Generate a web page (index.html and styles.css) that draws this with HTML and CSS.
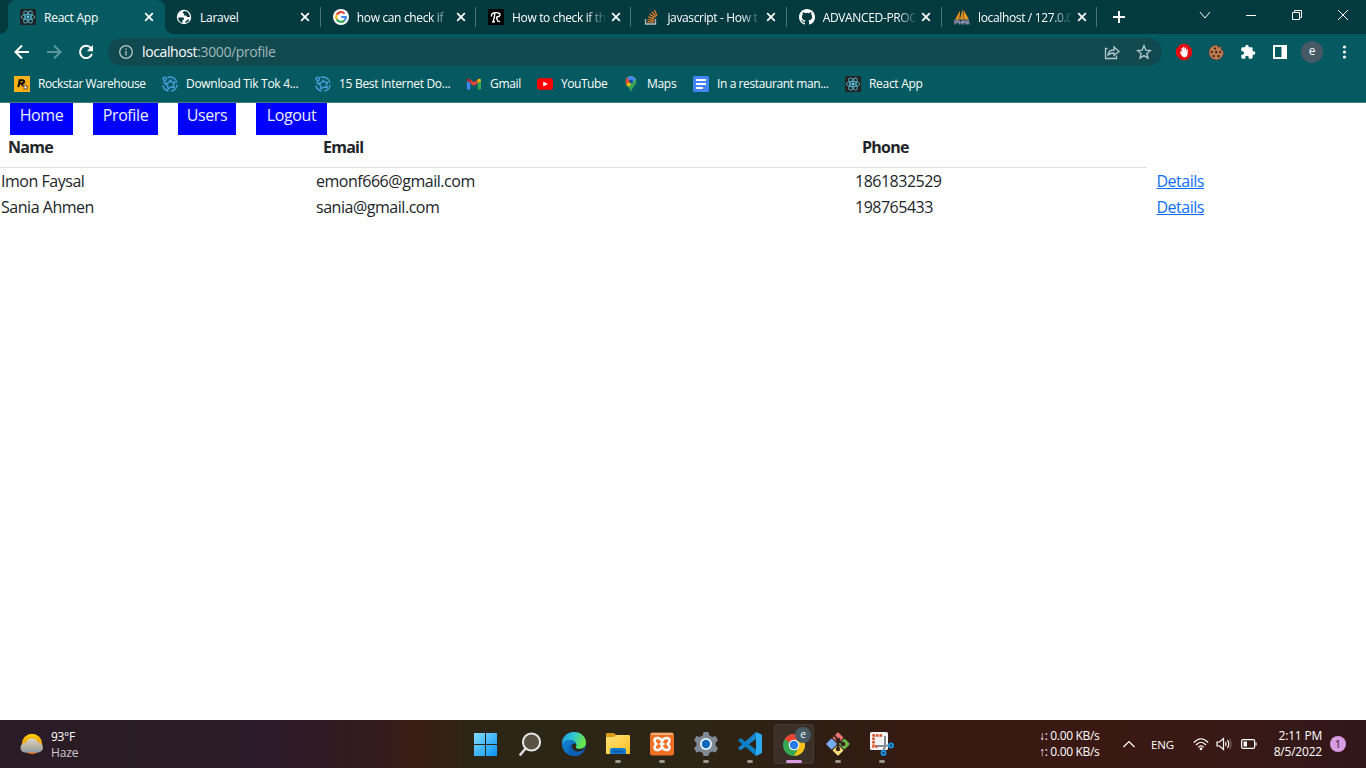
FILE: index.html
```html
<!DOCTYPE html>
<html lang="en">
<head>
<meta charset="utf-8">
<title>React App</title>
<link rel="stylesheet" href="styles.css">
</head>
<body>
<svg class="defs" width="0" height="0">
  <symbol id="react" viewBox="0 0 16 16"><rect width="16" height="16" rx="1.5" fill="#222"/><g fill="none" stroke="#53b5cc" stroke-width=".9"><ellipse cx="8" cy="8" rx="6.8" ry="2.6"/><ellipse cx="8" cy="8" rx="6.8" ry="2.6" transform="rotate(60 8 8)"/><ellipse cx="8" cy="8" rx="6.8" ry="2.6" transform="rotate(120 8 8)"/></g><circle cx="8" cy="8" r="1.4" fill="#61dafb"/></symbol>
  <symbol id="close" viewBox="0 0 10 10"><path d="M1.200 1.200l7.600 7.600M8.800 1.200L1.200 8.800" stroke="#fff" stroke-width="1.800"/></symbol>
  <symbol id="pma" viewBox="0 0 16 16"><path d="M1 10.500L6 2v8.500zM6 10.500L8.500 0l1 10.500zM9.500 1L15 10.500h-5z" fill="#f89c0e"/><path d="M8.800 1l1.600 9.500H8.500zM5.500 4l.8 6.500H4z" fill="#a06a3c"/><path d="M1 15.500v-4h3v2H1m4.500-2v4m0-2H8m0-2v4m1 0v-4l1.500 2 1.500-2v4m1 0l1-4 1.500 4" fill="none" stroke="#8c8ca8" stroke-width="1.300"/></symbol>
  <symbol id="startab" viewBox="0 0 16 16"><g fill="none" stroke="#4b9edb" stroke-width="1.400" stroke-linejoin="round"><path d="M5.500 1.500a7.200 7.200 0 0 1 9.500 5M15.200 8.500a7 7 0 0 1-6.200 6.600M6.500 15A7 7 0 0 1 .9 9.500M1 7l2.500-1.500"/><path d="M8.500 4l1.200 2.400 3.300-.2-1.800 2.600 1.200 3-3.500-.8L6 13l-.3-3.400L3 7.700l3.400-.9z"/><circle cx="2.800" cy="2.800" r="1.700"/></g></symbol>
</svg>

<header class="browser">
  <div class="tabstrip">
    <div class="tab tab-active"><svg class="fav"><use href="#react"/></svg><span class="title">React App</span><svg class="x"><use href="#close"/></svg></div>
    <div class="tab"><svg class="fav" viewBox="0 0 16 16"><circle cx="8" cy="8" r="7.200" fill="#fff"/><path d="M2.200 8.400l4.700.2c1.500.1 1.200 1.800.7 2.200l-1.200.4v2.700C3.800 13.400 2.300 11 2.200 8.400zM8.400 2c-1 .7-2 .7-1.600 2.200l1.300.4v1.800l2 .2 1 1.400 2.900-.1C13.700 4.700 11.300 2.200 8.400 2zM9.400 12.600l2.500-2 1.400.1c-.7 1.600-2 2.900-3.900 3.200z" fill="#043c42"/></svg><span class="title">Laravel</span><svg class="x"><use href="#close"/></svg></div>
    <div class="tab sep"><svg class="fav" viewBox="0 0 16 16"><circle cx="8" cy="8" r="8" fill="#fff"/><g fill="none" stroke-width="2.100"><path d="M11.600 4.600A4.900 4.900 0 0 0 3.700 5.700" stroke="#ea4335"/><path d="M3.700 5.700a4.900 4.900 0 0 0 0 4.600" stroke="#fbbc05"/><path d="M3.700 10.300a4.900 4.900 0 0 0 7.600 1.300" stroke="#34a853"/><path d="M11.300 11.600A4.900 4.900 0 0 0 12.900 8H8.200" stroke="#4285f4"/></g></svg><span class="title fade">how can check if</span><svg class="x"><use href="#close"/></svg></div>
    <div class="tab sep"><svg class="fav" viewBox="0 0 16 16"><rect width="16" height="16" rx="1" fill="#000"/><path d="M3.400 7.500C3 4.500 5.500 3.600 8 3.600c3 0 4.500 1 3.900 2.700-.5 1.300-2.300 1.900-4 2M7 4.200L5.300 12.600M4 12.700h3M8.300 8.400l1.500 3.800 2.300.4" fill="none" stroke="#fff" stroke-width="1.400"/></svg><span class="title fade">How to check if th</span><svg class="x"><use href="#close"/></svg></div>
    <div class="tab sep"><svg class="fav" viewBox="0 0 16 16"><path d="M2.500 10v5h10v-5" fill="none" stroke="#bcbbbb" stroke-width="1.300"/><path d="M4.200 12.900h6.600M4.500 10.500l6.400.9M5.200 7.900l6.100 2M6.600 5.200l5.500 3.400M8.700 2.800l4.300 4.800M11.500 1l2.400 5.800" stroke="#f48024" stroke-width="1.200"/></svg><span class="title fade">javascript - How t</span><svg class="x"><use href="#close"/></svg></div>
    <div class="tab sep"><svg class="fav" viewBox="0 0 16 16"><path fill="#fff" d="M8 0C3.58 0 0 3.58 0 8c0 3.54 2.29 6.53 5.47 7.59.4.07.55-.17.55-.38 0-.19-.01-.82-.01-1.49-2.01.37-2.53-.49-2.69-.94-.09-.23-.48-.94-.82-1.13-.28-.15-.68-.52-.01-.53.63-.01 1.08.58 1.23.82.72 1.21 1.87.87 2.33.66.07-.52.28-.87.51-1.07-1.78-.2-3.64-.89-3.64-3.95 0-.87.31-1.59.82-2.15-.08-.2-.36-1.02.08-2.12 0 0 .67-.21 2.2.82a7.7 7.7 0 0 1 4 0c1.53-1.04 2.2-.82 2.2-.82.44 1.1.16 1.92.08 2.12.51.56.82 1.27.82 2.15 0 3.07-1.87 3.75-3.65 3.95.29.25.54.73.54 1.48 0 1.07-.01 1.93-.01 2.2 0 .21.15.46.55.38A8 8 0 0 0 16 8c0-4.42-3.58-8-8-8z"/></svg><span class="title fade">ADVANCED-PROG</span><svg class="x"><use href="#close"/></svg></div>
    <div class="tab sep"><svg class="fav"><use href="#pma"/></svg><span class="title fade">localhost / 127.0.0</span><svg class="x"><use href="#close"/></svg></div>
    <div class="newtab sep"><svg width="12" height="12"><path d="M6 0v12M0 6h12" stroke="#fff" stroke-width="2"/></svg></div>
    <div class="winctl">
      <svg width="12" height="12" viewBox="0 0 12 12"><path d="M1 3l5 6 5-6"/></svg>
      <svg width="12" height="12" viewBox="0 0 12 12"><path d="M1 6.500h10"/></svg>
      <svg width="12" height="12" viewBox="0 0 12 12"><path d="M1.500 3.500h7v7h-7zM3.500 3.500v-2h7v7h-2"/></svg>
      <svg width="12" height="12" viewBox="0 0 12 12"><path d="M1 1l10 10M11 1L1 11"/></svg>
    </div>
  </div>

  <div class="toolbar">
    <div class="navbtns">
      <svg viewBox="0 0 16 16"><path d="M15 8H2M8 1.500L1.500 8 8 14.500" stroke="#fff"/></svg>
      <svg viewBox="0 0 16 16"><path d="M1 8h13M8 1.500L14.500 8 8 14.500" stroke="#5a979b"/></svg>
      <svg viewBox="0 0 16 16"><path d="M13 4.200A6.100 6.100 0 1 0 14 9.700" stroke="#fff"/><polygon points="15,1 15,7.200 8.800,7.200" fill="#fff"/></svg>
    </div>
    <div class="omnibox">
      <svg class="info" viewBox="0 0 14 14"><circle cx="7" cy="7" r="6.300"/><path d="M7 6v4.500M7 3.400v1.500"/></svg>
      <span class="url"><b>localhost</b>:3000/profile</span>
      <svg class="share" viewBox="0 0 16 16"><path d="M3.500 4.500h-2v10h11v-3M4 11c.2-3.500 2.500-5 6-5V3l5 4.500-5 4V9C7 9 5.500 9.500 4 11z"/></svg>
      <svg class="star" viewBox="0 0 16 16"><path d="M8 1.800l1.800 4.300 4.700.4-3.600 3 1.100 4.600-4-2.500-4 2.500 1.100-4.600-3.600-3 4.700-.4z"/></svg>
    </div>
    <div class="exts">
      <svg viewBox="0 0 16 16"><path d="M5 0h6l5 5v6l-5 5H5l-5-5V5z" fill="#e20d12"/><path d="M4.500 7.500l1 .8V4.200q.6-.8 1.200 0V7l.4-3.800q.6-.8 1.200 0V7l.5-3.200q.6-.8 1.200 0V8l.5-2.700q.7-.7 1.200 0v4c0 2.500-1.300 4-3 4-2.500 0-4-3-4.700-5z" fill="#fff"/></svg>
      <svg viewBox="0 0 16 16"><path d="M9 .8l1 2.200 1.500.2.500-1 1.500 1-.3 2.200L15.500 7A7.400 7.400 0 1 1 3.500 2.800L5 1.800z" fill="#bd7950" stroke="#3d2926" stroke-width=".5"/><g fill="#2b1818"><circle cx="7" cy="4.500" r="1"/><circle cx="3.700" cy="8" r="1.100"/><circle cx="8.200" cy="8.200" r="1.100"/><circle cx="12.200" cy="8" r="1"/><circle cx="5.700" cy="12" r="1.100"/><circle cx="10.500" cy="12.200" r="1.100"/></g></svg>
      <svg viewBox="0 0 24 24"><path fill="#fff" d="M20.500 11H19V7a2 2 0 0 0-2-2h-4V3.500a2.500 2.500 0 0 0-5 0V5H4a2 2 0 0 0-2 2v3.800h1.500a2.700 2.700 0 0 1 0 5.400H2V20a2 2 0 0 0 2 2h3.800v-1.500a2.700 2.700 0 0 1 5.400 0V22H17a2 2 0 0 0 2-2v-4h1.500a2.500 2.500 0 0 0 0-5z"/></svg>
      <svg viewBox="0 0 16 16"><path d="M2 2h12v12H2zM10.500 2v12M12 2v12" fill="none" stroke="#fff" stroke-width="2"/></svg>
      <span class="avatar">e</span>
      <svg viewBox="0 0 16 16"><g fill="#fff"><circle cx="8.500" cy="3" r="1.600"/><circle cx="8.500" cy="8" r="1.600"/><circle cx="8.500" cy="13" r="1.600"/></g></svg>
    </div>
  </div>

  <div class="bookmarks">
    <span class="bm bm-rock"><svg viewBox="0 0 16 16"><rect width="16" height="16" fill="#fcaf17"/><path d="M4.300 11L5.700 4.300h2.800c2.600 0 2.200 3.200-.5 3.200H5.500M8 7.500l.8 2.500" fill="none" stroke="#000" stroke-width="1.900"/><path d="M11.500 8.500l.7 1.800 2 .1-1.600 1.200.6 2-1.700-1.100-1.800 1 .6-1.900-1.500-1.300h1.900z" fill="#fff" stroke="#000" stroke-width=".5"/></svg>Rockstar Warehouse</span>
    <span class="bm bm-tik"><svg><use href="#startab"/></svg>Download Tik Tok 4...</span>
    <span class="bm bm-best"><svg><use href="#startab"/></svg>15 Best Internet Do...</span>
    <span class="bm bm-gmail"><svg viewBox="0 0 16 16"><path d="M1 13.500V4l3.300 2.500v7z" fill="#4285f4"/><path d="M11.700 13.500v-7L15 4v9.500z" fill="#34a853"/><path d="M4.300 6.500v-3L8 6.300l3.700-2.800v3.600L8 10 4.300 7.100z" fill="#ea4335"/><path d="M1 4.300c0-1.800 2-2.200 3.300-.8v3.600L1 4.700z" fill="#c5221f"/><path d="M15 4.300c0-1.800-2-2.200-3.300-.8v3.600L15 4.700z" fill="#fbbc04"/></svg>Gmail</span>
    <span class="bm bm-yt"><svg viewBox="0 0 16 16"><rect y="2.300" width="16" height="11.400" rx="2.500" fill="red"/><path d="M6.300 5.500v5L10.800 8z" fill="#fff"/></svg>YouTube</span>
    <span class="bm bm-maps"><svg viewBox="0 0 16 16"><path d="M8 .3a5.300 5.300 0 0 0-5.300 5.300C2.700 9 6.800 11.500 8 15.800 9.200 11.500 13.300 9 13.300 5.600A5.300 5.300 0 0 0 8 .3z" fill="#34a853"/><path d="M8 .3a5.300 5.300 0 0 1 4.700 3L5.200 11C3.500 9 2.700 7.500 2.700 5.600A5.300 5.300 0 0 1 8 .3z" fill="#fbbc04"/><path d="M8 .3a5.300 5.300 0 0 1 4.700 3L8.500 8 4 2C5 .9 6.500.3 8 .3z" fill="#4285f4"/><path d="M4 2l3 2.700-3.500 3.800C2.300 6.600 2.500 3.800 4 2z" fill="#ea4335"/><circle cx="8" cy="5.600" r="1.900" fill="#0b4f91"/></svg>Maps</span>
    <span class="bm bm-docs"><svg viewBox="0 0 16 16"><rect width="16" height="16" rx="1.500" fill="#4285f4"/><path d="M3 4h10M3 8h10M3 12h7" stroke="#fff" stroke-width="2"/></svg>In a restaurant man...</span>
    <span class="bm bm-react"><svg><use href="#react"/></svg>React App</span>
  </div>
</header>

<main class="page">
  <nav class="menu"><a class="w-home">Home</a><a class="w-profile">Profile</a><a class="w-users">Users</a><a class="w-logout">Logout</a></nav>
  <div class="row head"><b class="c-name">Name</b><b class="c-email">Email</b><b class="c-phone">Phone</b></div>
  <div class="row"><span class="c-name">Imon Faysal</span><span class="c-email">emonf666@gmail.com</span><span class="c-phone">1861832529</span><a class="details">Details</a></div>
  <div class="row"><span class="c-name">Sania Ahmen</span><span class="c-email">sania@gmail.com</span><span class="c-phone">198765433</span><a class="details">Details</a></div>
</main>

<footer class="taskbar">
  <div class="weather">
    <svg width="24" height="24" viewBox="0 0 24 24"><defs><linearGradient id="sun" x2="0" y2="1"><stop stop-color="#ffd000"/><stop offset="1" stop-color="#f26a18"/></linearGradient><linearGradient id="cl" x2="0" y2="1"><stop stop-color="#d8d6cb"/><stop offset=".55" stop-color="#b9b2a1"/><stop offset="1" stop-color="#8f9baa"/></linearGradient></defs><circle cx="13" cy="12" r="10.200" fill="url(#sun)"/><path d="M5 20.500A5 5 0 0 1 5 11q1.500 0 2-.5a6.500 6.500 0 0 1 12 0 5 5 0 0 1 0 10z" fill="url(#cl)"/></svg>
    <div class="temps"><div class="temp">93°F</div><div class="haze">Haze</div></div>
  </div>
  <div class="apps">
    <span class="app"><svg viewBox="0 0 24 24"><defs><linearGradient id="win" x2="1" y2="1"><stop stop-color="#83dcff"/><stop offset="1" stop-color="#0794f5"/></linearGradient></defs><path d="M0 1h11v11H0zM12 1h11v11H12zM0 13h11v11H0zM12 13h11v11H12z" fill="url(#win)"/></svg></span>
    <span class="app"><svg viewBox="0 0 24 24"><path d="M2.500 22.500L8 16" stroke="#d9dadd" stroke-width="2.700" stroke-linecap="round"/><circle cx="13.500" cy="10" r="8.600" fill="#595143" stroke="#e7e8ea" stroke-width="2"/></svg></span>
    <span class="app"><svg viewBox="0 0 24 24"><defs><linearGradient id="ed" x2="1" y2=".3"><stop stop-color="#1c9bdf"/><stop offset=".5" stop-color="#2fc5d4"/><stop offset="1" stop-color="#69e647"/></linearGradient><linearGradient id="ed2" x2="1" y2="1"><stop stop-color="#1594e0"/><stop offset="1" stop-color="#0c4fa5"/></linearGradient></defs><circle cx="12" cy="12" r="12" fill="url(#ed2)"/><path d="M0 10C1 4 6 0 12 0c7 0 12 5 12 10.500 0 4-3 6.300-6.500 6.300-3 0-4-1-3.500-2 1-1.500.5-7-6-7-4 0-7 1.500-8 4.200z" fill="url(#ed)"/><path d="M10 11c-1.500 4.500 1.500 9 7 9 2.500 0 4.500-.8 5.500-2-2 4-6 6-10 6C6 23 5 14 10 11z" fill="#0b60b8"/><path d="M13.700 11.500c1 1 .6 2.500.1 3.400-.5 1.200 1 2.200 4 2.200 2.300 0 4.200-.8 5.300-2-1 3-4 4.400-7 4.300-5-.2-7.500-4-5.500-7.500z" fill="#2c2817"/></svg></span>
    <span class="app run"><svg viewBox="0 0 24 24"><defs><linearGradient id="fo" x2="1" y2="1"><stop stop-color="#ffe27a"/><stop offset="1" stop-color="#ffc021"/></linearGradient></defs><path d="M0 2q0-1 1-1h7l3 3-3 4H0z" fill="#d89a0c"/><path d="M0 6q0-1 1-1h7l2-2h13q1 0 1 1v18H0z" fill="url(#fo)"/><path d="M4 22v-4q0-2 2-2h12q2 0 2 2v4z" fill="#157bd1"/><path d="M7 18.500h10v2H7z" fill="#095aa8"/></svg></span>
    <span class="app run"><svg viewBox="0 0 24 24"><rect y=".5" width="24" height="23" rx="2.500" fill="#ed7023"/><path d="M1 1h22v2H1z" fill="#f6ae7f"/><path d="M12 9.500C11 5.500 4.500 4.500 4.500 8.500q0 2 2 3.500-2 1.500-2 3.500c0 4 6.500 3 7.500-1 1 4 7.500 5 7.500 1q0-2-2-3.500 2-1.500 2-3.500c0-4-6.500-3-7.500 1zM9.500 12h5" fill="none" stroke="#fff" stroke-width="2.500" stroke-linejoin="round"/></svg></span>
    <span class="app run"><svg viewBox="0 0 24 24"><path d="M9.500 0h5l.8 3.400 3 1.700 3.300-1 2.400 4.200-2.400 2.400v3l2.400 2.400-2.400 4.300-3.300-1-3 1.700-.8 3h-5l-.8-3-3-1.700-3.300 1L0 16.100l2.400-2.400v-3L0 8.300l2.400-4.200 3.300 1 3-1.700z" fill="#7e8a96"/><circle cx="12" cy="12" r="6" fill="#e9f3fb"/><circle cx="12" cy="12" r="4.200" fill="#1268b9"/></svg></span>
    <span class="app run"><svg viewBox="0 0 24 24"><path d="M18 0v7L2.500 18.500 0 16z" fill="#1684cb"/><path d="M0 8.500L2.500 6 18 17.500V24z" fill="#087ec5"/><path d="M18 0l6 2.800V21l-6 3z" fill="#2aaaf2"/></svg></span>
    <span class="app run active"><svg viewBox="0 0 24 24"><circle cx="12" cy="13" r="11" fill="#35a853"/><path d="M12 13L2.500 7.500A11 11 0 0 1 21.500 7.500z" fill="#ea4335"/><path d="M12 13V7.800h9.700A11 11 0 0 1 12 24l4.500-8.400z" fill="#fbc116"/><path d="M2.500 7.500L12 24l4-8z" fill="#35a853"/><circle cx="12" cy="13" r="5.300" fill="#fff"/><circle cx="12" cy="13" r="4.200" fill="#267be9"/></svg><i class="badge">e</i></span>
    <span class="app run"><svg viewBox="0 0 24 24"><g transform="rotate(45 12 12)"><rect x="3.500" y="3.500" width="8" height="8" rx="1" fill="#ee7377"/><rect x="12.500" y="3.500" width="8" height="8" rx="1" fill="#69b543"/><rect x="3.500" y="12.500" width="8" height="8" rx="1" fill="#77aaf4"/><rect x="12.500" y="12.500" width="8" height="8" rx="1" fill="#f8df79"/></g><path d="M8 3l4 5v10M12 8l5 4" fill="none" stroke="#37251c" stroke-width="2"/><g fill="#37251c"><circle cx="12" cy="8" r="2.300"/><circle cx="12" cy="17" r="2.300"/><circle cx="17" cy="12" r="2.300"/></g></svg></span>
    <span class="app run"><svg viewBox="0 0 24 24"><rect width="18" height="18" rx="1.500" fill="#f4f4f4"/><path d="M12 3.500H3.500v11H8" fill="none" stroke="#d84a1b" stroke-width="2.500" stroke-dasharray="2.500 1"/><path d="M15 4v11l-2 4M7 14h8l5-1" fill="none" stroke="#828c94" stroke-width="2"/><g fill="none" stroke="#1295e6" stroke-width="2"><circle cx="21" cy="13.500" r="2"/><circle cx="13.500" cy="21" r="2"/></g></svg></span>
  </div>
  <div class="tray">
    <div class="net"><div>↓: 0.00 KB/s</div><div>↑: 0.00 KB/s</div></div>
    <svg class="up" viewBox="0 0 12 8"><path d="M.5 7L6 1.500 11.500 7"/></svg>
    <span class="eng">ENG</span>
    <svg class="wifi" viewBox="0 0 16 14"><path d="M.8 5.500q7.200-7.500 14.400 0M3 8q5-5.500 10 0M5.200 10.300q2.800-3 5.600 0"/><circle cx="8" cy="11.800" r="1.400" fill="#fff"/></svg>
    <svg class="vol" viewBox="0 0 16 14"><path d="M1 5h2.500L7.500 1.500v11L3.500 9H1zM9.500 5q1.200 2 0 4M11.500 3.200q2.500 3.800 0 7.600"/><path d="M13.600 1.800q3 5.200 0 10.400" opacity=".3"/></svg>
    <svg class="bat" viewBox="0 0 16 12"><rect x=".6" y="1.600" width="13" height="8.800" rx="1.500"/><path d="M15 4.500v3"/><polygon points="2.500,3.500 6,3.500 6,8.500 2.500,8.500" fill="#fff"/></svg>
    <div class="clock"><div>2:11 PM</div><div class="date">8/5/2022</div></div>
    <span class="count">1</span>
  </div>
</footer>
</body>
</html>
```
FILE: styles.css
```css
* { box-sizing: border-box; }
body { margin: 0; width: 1366px; height: 768px; overflow: hidden; display: flex; flex-direction: column; background: #fff; font-family: "Open Sans", "Noto Sans", sans-serif; }
svg { display: block; flex: none; }
.defs { position: absolute; }

.browser { height: 103px; background: #045a60; border-bottom: 1px solid #3d8084; color: #fff; font-size: 12px; letter-spacing: -.3px; }
.tabstrip { height: 34px; display: flex; align-items: center; padding-left: 8px; background: #033a40; }
.tab { position: relative; flex: none; width: 155.300px; height: 34px; display: flex; align-items: center; padding: 0 10.500px 0 12px; }
.tab-active { width: 157px; padding-right: 11px; background: #045a60; border-radius: 8px 8px 0 0; }
.tab-active::before, .tab-active::after { content: ""; position: absolute; bottom: 0; left: -8px; width: 8px; height: 8px; background: radial-gradient(circle at 0 0, transparent 7.500px, #045a60 8px); }
.tab-active::after { left: auto; right: -8px; background: radial-gradient(circle at 100% 0, transparent 7.500px, #045a60 8px); }
.tab-active + .tab { width: 155.800px; padding-left: 11px; }
.sep::before { content: ""; position: absolute; left: -1px; top: 7px; width: 1px; height: 20px; background: #4c7478; }
.fav { width: 16px; height: 16px; margin-right: 8px; }
.title { flex: 1; min-width: 0; white-space: nowrap; margin-right: 9px; letter-spacing: -.25px; }
.fade { margin-right: 6px; letter-spacing: -.35px; -webkit-mask-image: linear-gradient(90deg, #000 74px, transparent 95px); mask-image: linear-gradient(90deg, #000 74px, transparent 95px); }
.x { width: 10px; height: 10px; }
.newtab { position: relative; width: 44px; height: 34px; display: flex; align-items: center; justify-content: center; }
.winctl { flex: 1; display: flex; justify-content: flex-end; gap: 34px; padding: 0 17px 5px 0; }
.winctl path { fill: none; stroke: #fff; stroke-width: 1; }

.toolbar { height: 36px; display: flex; align-items: center; padding: 0 13px 0 14px; }
.navbtns { display: flex; gap: 16px; width: 94px; }
.navbtns svg { width: 16px; height: 16px; }
.navbtns path { fill: none; stroke-width: 2; }
.omnibox { width: 1054px; height: 28px; display: flex; align-items: center; padding: 0 10px 0 11px; border-radius: 14px; background: #10494f; }
.omnibox path, .omnibox circle { fill: none; stroke: #b7c8ca; stroke-width: 1.300; }
.info { width: 14px; height: 14px; margin-right: 9px; }
.url { flex: 1; font-size: 14px; line-height: 20px; padding-bottom: 1px; letter-spacing: -.38px; color: #a3b7b9; }
.url b { font-weight: 400; color: #fff; }
.share { width: 16px; height: 16px; margin-right: 16px; }
.star { width: 16px; height: 16px; }
.exts { flex: 1; display: flex; align-items: center; padding-left: 14px; gap: 16px; }
.exts svg { width: 16px; height: 16px; }
.avatar { width: 22px; height: 22px; margin: 0 -3px; border-radius: 50%; background: #455a64; text-align: center; line-height: 20px; font-size: 12px; }
.bookmarks { height: 28px; display: flex; align-items: center; padding-left: 14px; }
.bm { display: flex; align-items: center; gap: 8px; white-space: nowrap; line-height: 16px; }
.bm svg { width: 16px; height: 16px; }
.bm-rock { width: 148px; letter-spacing: -.42px; } .bm-tik { width: 153px; } .bm-best { width: 151px; } .bm-gmail { width: 71px; }
.bm-yt { width: 86px; letter-spacing: -.45px; } .bm-maps { width: 70px; } .bm-docs { width: 152px; letter-spacing: -.4px; }

.page { flex: 1; font-size: 16px; line-height: 24px; letter-spacing: -.47px; color: #212529; }
.menu { display: flex; gap: 20px; padding-left: 10px; height: 32px; }
.menu a { background: #00f; color: #e9efff; text-align: center; line-height: 25px; letter-spacing: -.4px; }
.w-home { width: 63px; } .w-profile { width: 65px; } .w-users { width: 58px; } .w-logout { width: 71px; }
.row { display: flex; height: 26px; line-height: 25px; padding-left: 1px; }
.row > * { flex: none; }
.head { width: 1147px; height: 33px; margin-bottom: 1px; padding-left: 8px; line-height: 25px; letter-spacing: -.75px; border-bottom: 1px solid #dee2e6; }
.c-name { width: 315px; } .c-email { width: 539px; } .c-phone { width: 301.500px; }
.head .c-phone { width: 200px; }
.c-phone { letter-spacing: -.5px; }
.head .c-phone { letter-spacing: -.75px; }
.details { color: #0d6efd; text-decoration: underline; letter-spacing: -.5px; }

.taskbar { height: 48px; display: flex; align-items: center; color: #fff; font-size: 12px; background: linear-gradient(90deg, #2b1a28 0, #291d23 120px, #2d1b2c 270px, #341b1d 370px, #3a1e13 420px, #2d2616 470px, #2d2516 700px, #301d13 840px, #3a1812 960px, #3a1914 1200px, #31171a 1366px); }
.weather { width: 466px; display: flex; align-items: center; gap: 8px; padding-left: 19px; line-height: 16px; letter-spacing: -.3px; }
.temps { padding-top: 2px; }
.haze { color: #cfc8cc; letter-spacing: -.1px; }
.apps { display: flex; gap: 4px; }
.app { position: relative; width: 40px; height: 40px; display: flex; align-items: center; justify-content: center; border-radius: 4px; }
.app > svg { width: 24px; height: 24px; }
.run::after { content: ""; position: absolute; left: 17px; top: 36px; width: 6px; height: 3px; border-radius: 2px; background: #9a958c; }
.active { background: #3b3028; box-shadow: inset 0 0 0 1px #463b33; }
.active::after { left: 12px; width: 16px; background: #d99ce2; }
.badge { position: absolute; left: 21px; top: 3px; width: 16px; height: 16px; border-radius: 50%; background: #455a64; font: 10px/15px "Open Sans", sans-serif; text-align: center; }
.tray { flex: 1; display: flex; align-items: center; padding-left: 137px; line-height: 16px; }
.tray path, .tray rect { fill: none; stroke: #fff; stroke-width: 1.200; }
.net { width: 84px; letter-spacing: -.32px; white-space: nowrap; }
.up { width: 12px; height: 8px; margin-right: 16px; }
.eng { width: 42px; font-size: 11.500px; padding-top: 1px; letter-spacing: -.1px; }
.wifi { width: 16px; height: 14px; margin-right: 7px; }
.vol { width: 16px; height: 14px; margin-right: 9px; }
.bat { width: 16px; height: 12px; }
.clock { flex: 1; text-align: right; margin-right: 8px; letter-spacing: -.2px; }
.count { width: 16px; height: 16px; margin-right: 20px; border-radius: 50%; background: #d99ce2; color: #37172b; font-size: 11px; line-height: 16px; text-align: center; }
```
